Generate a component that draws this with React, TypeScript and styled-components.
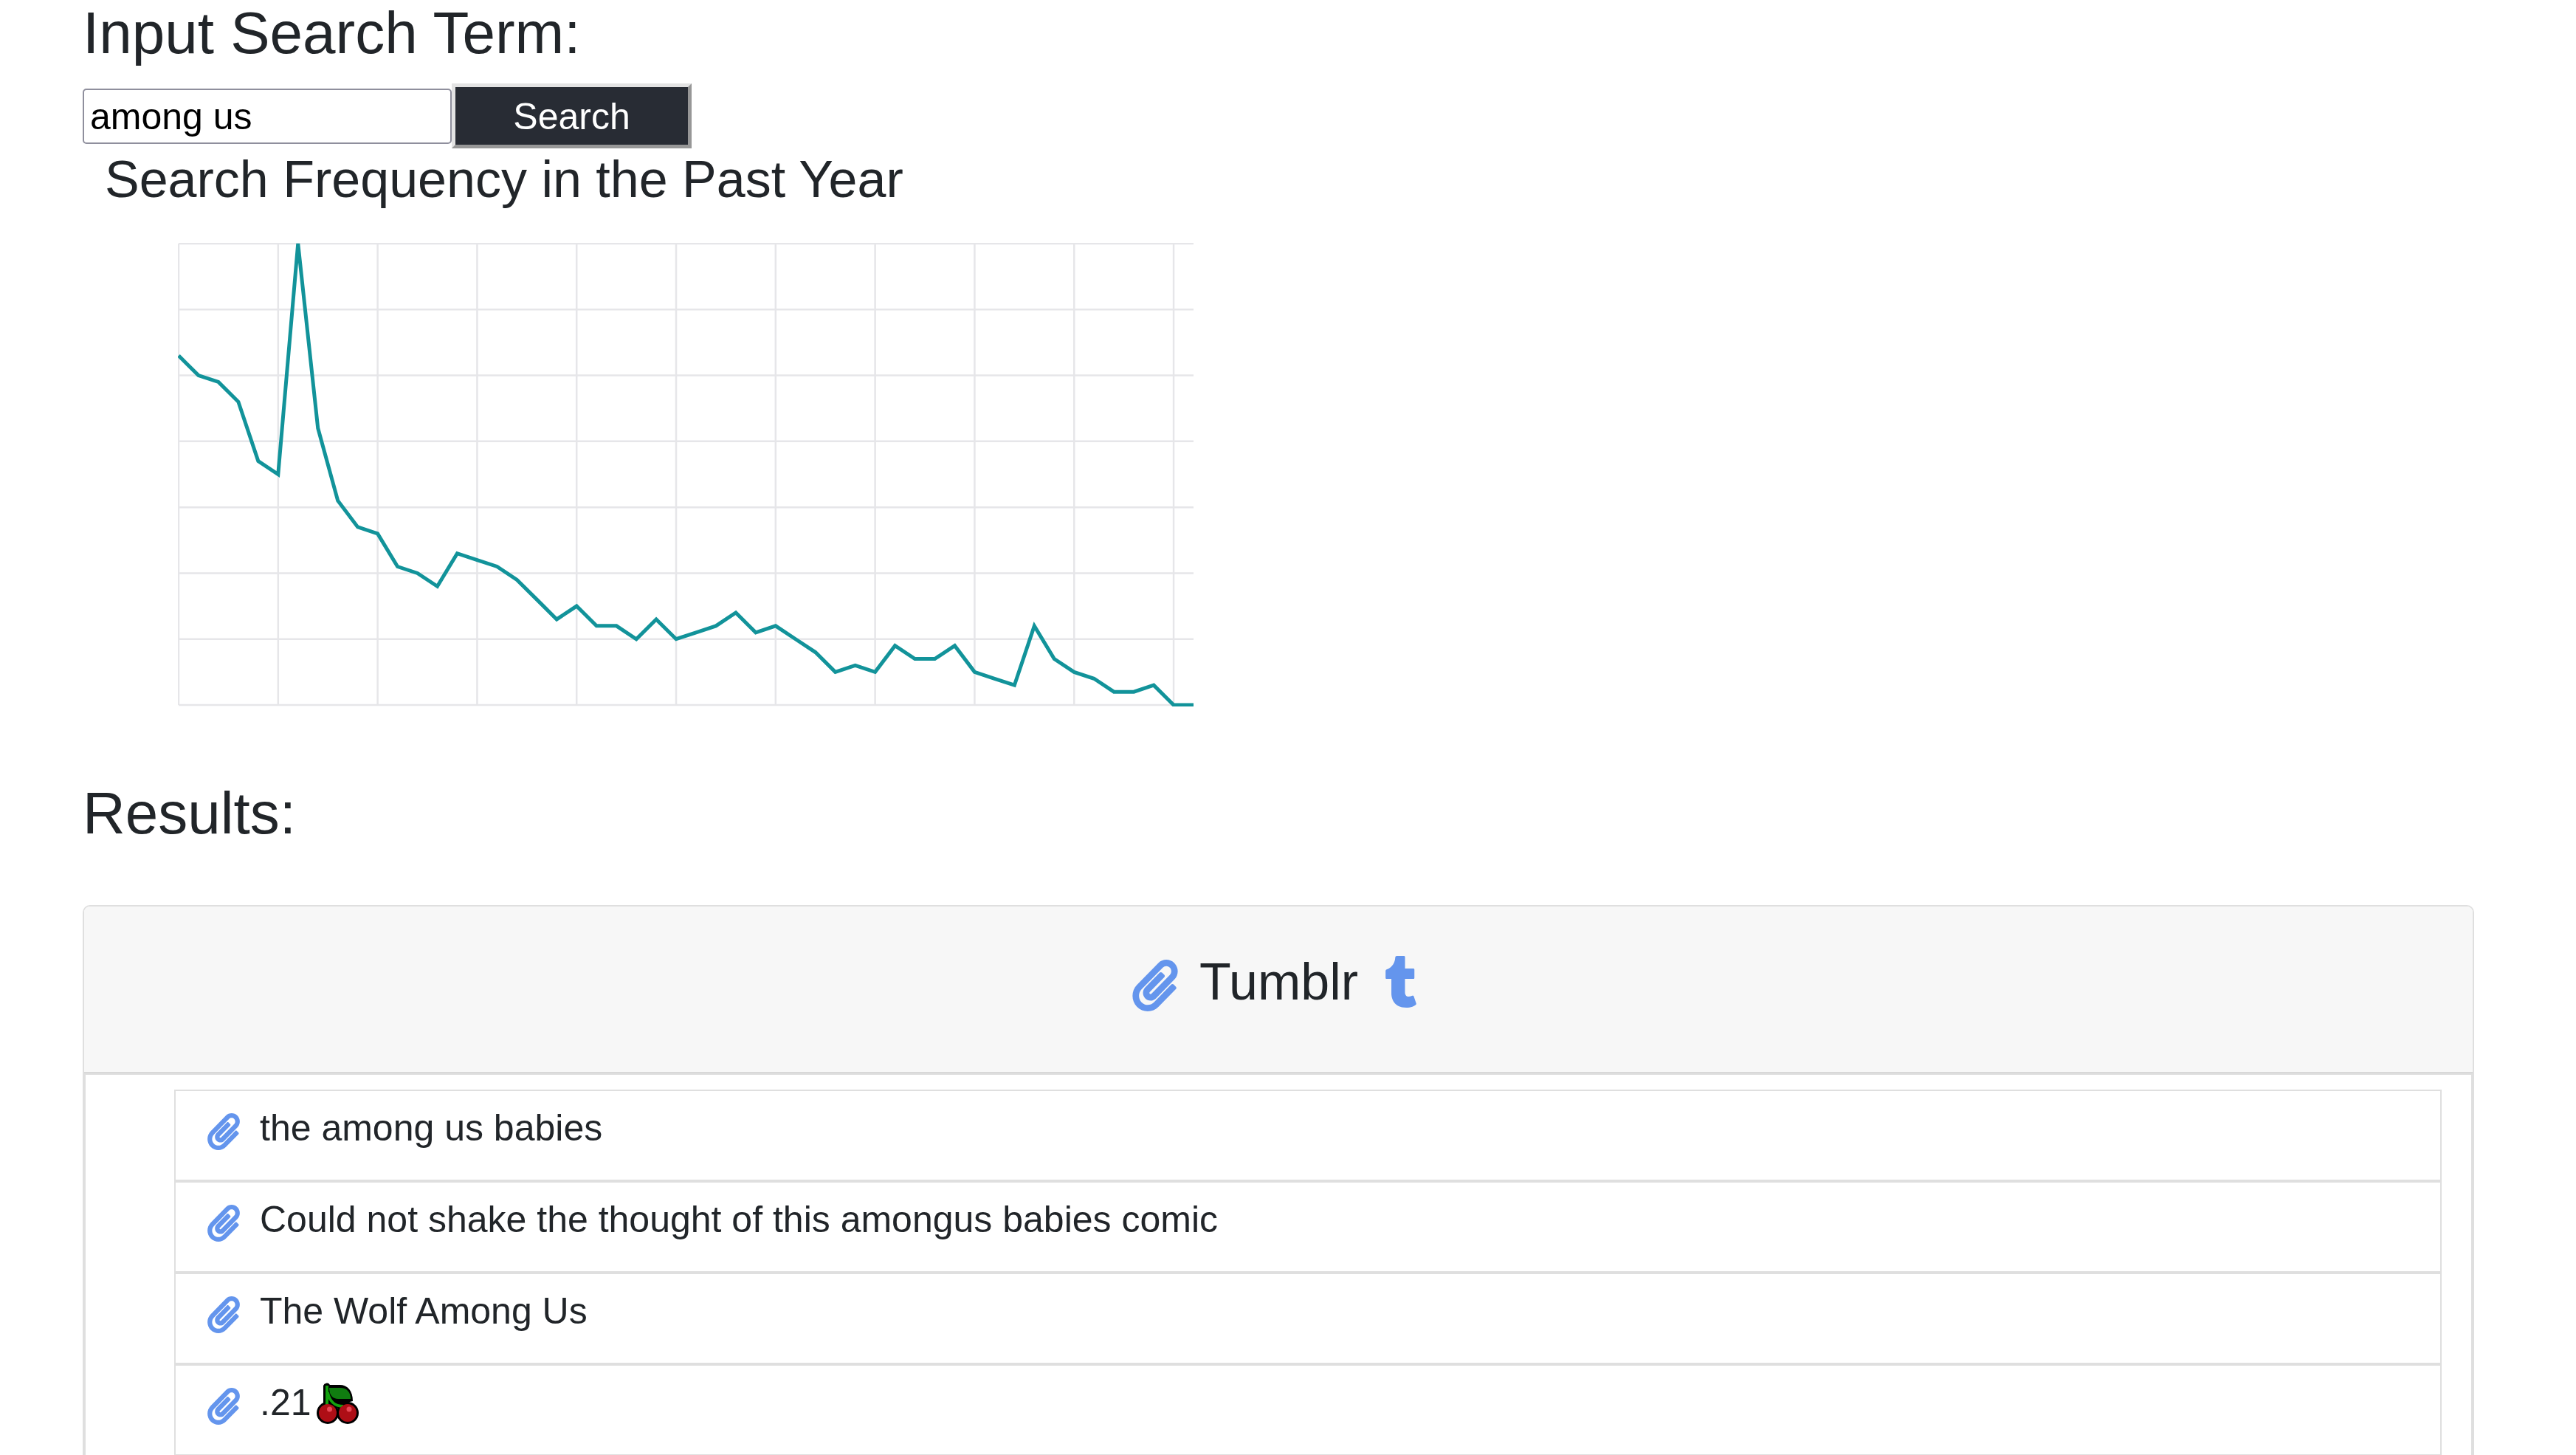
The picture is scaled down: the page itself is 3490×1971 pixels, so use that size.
import React, { useState } from "react";
import styled, { createGlobalStyle } from "styled-components";
import { FaPaperclip, FaTumblr } from "react-icons/fa";

const GlobalStyle = createGlobalStyle`
  *, *::before, *::after { box-sizing: border-box; }
  body {
    margin: 0;
    background: #fff;
    color: #212529;
    font-family: Arial, "Liberation Sans", sans-serif;
    font-size: 50px;
    line-height: 75px;
  }
`;

const Page = styled.main`
  height: 100vh;
  overflow: hidden;
  padding: 0 138px 0 112px;
`;

const Heading = styled.h1`
  margin: 0;
  font-size: 80px;
  font-weight: 400;
  line-height: 90px;
`;

const HeadingLabel = styled.label`
  display: block;
`;

const SearchForm = styled.form`
  display: flex;
  align-items: center;
  margin-top: 23px;
`;

const SearchInput = styled.input`
  width: 500px;
  height: 75px;
  padding: 2px 8px 0;
  border: 2px solid #8f8f9d;
  border-radius: 5px;
  background: #fff;
  color: #000;
  font: inherit;
  line-height: 60px;
`;

const SearchButton = styled.button`
  width: 325px;
  height: 88px;
  padding: 2px 0 0;
  border: 5px solid;
  border-color: #e3e3e3 #979797 #979797 #e3e3e3;
  background: #282c34;
  color: #fff;
  font: inherit;
  line-height: 60px;
`;

const ChartTitle = styled.h2`
  margin: 0 0 0 30px;
  font-size: 70px;
  font-weight: 400;
  line-height: 84px;
`;

const ChartArea = styled.section`
  padding: 44px 0 100px 129px;
`;

const ChartSvg = styled.svg`
  display: block;
  width: 1376px;
  height: 628px;
`;

const Card = styled.section`
  margin-top: 79px;
  border: 2px solid #dfdfdf;
  border-radius: 10px;
`;

const CardHeader = styled.header`
  display: flex;
  justify-content: center;
  align-items: center;
  padding: 60px 10px 80px 0;
  border-bottom: 2px solid #d8d8d8;
  border-radius: 8px 8px 0 0;
  background: #f7f7f7;
`;

const CardTitle = styled.h2`
  margin: 0 36px 0 29px;
  font-size: 70px;
  font-weight: 400;
  line-height: 84px;
`;

const Clip = styled(FaPaperclip)<{ $large?: boolean }>`
  flex: none;
  width: ${(p) => (p.$large ? 62 : 44)}px;
  height: ${(p) => (p.$large ? 70 : 50)}px;
  margin-top: ${(p) => (p.$large ? 10 : 8)}px;
  color: #6495ed;
`;

const TumblrMark = styled(FaTumblr)`
  flex: none;
  width: 44px;
  height: 70px;
  color: #6495ed;
`;

const CardBody = styled.div`
  padding: 20px 40px 20px 120px;
  border: 2px solid #dfdfdf;
`;

const ResultList = styled.ul`
  margin: 0;
  padding: 0;
  list-style: none;
`;

const ResultRow = styled.li`
  display: flex;
  align-items: center;
  padding: 13px 43px 32px;
  border: 2px solid #dfdfdf;
`;

const ResultText = styled.span`
  margin-left: 27px;
`;

const CherrySvg = styled.svg`
  flex: none;
  width: 57px;
  height: 57px;
  margin-left: 7px;
`;

const FREQUENCY = [
  53, 50, 49, 46, 37, 35, 70, 42, 31, 27, 26, 21, 20, 18, 23, 22, 21, 19, 16,
  13, 15, 12, 12, 10, 13, 10, 11, 12, 14, 11, 12, 10, 8, 5, 6, 5, 9, 7, 7, 9, 5,
  4, 3, 12, 7, 5, 4, 2, 2, 3, 0, 0,
];

const PLOT_WIDTH = 1375;
const PLOT_HEIGHT = 625;
const MAX_VALUE = 70;

function FrequencyChart() {
  const x = (i: number) => (i * PLOT_WIDTH) / (FREQUENCY.length - 1);
  const y = (v: number) => PLOT_HEIGHT - (v * PLOT_HEIGHT) / MAX_VALUE;
  const columns = Array.from({ length: 11 }, (_, i) => x(i * 5));
  const rows = Array.from({ length: 8 }, (_, i) => y(i * 10));
  const points = FREQUENCY.map((v, i) => `${x(i)},${y(v)}`).join(" ");
  return (
    <ChartSvg viewBox="-1 -1 1376 628" role="img" aria-label="Search frequency">
      <g stroke="#e6e6e9" strokeWidth="2.5">
        {columns.map((c) => (
          <line key={c} x1={c} x2={c} y1={0} y2={PLOT_HEIGHT} />
        ))}
        {rows.map((r) => (
          <line key={r} x1={0} x2={PLOT_WIDTH} y1={r} y2={r} />
        ))}
      </g>
      <polyline points={points} fill="none" stroke="#12939a" strokeWidth="5" />
    </ChartSvg>
  );
}

function Cherries() {
  return (
    <CherrySvg viewBox="0 0 57 57" role="img" aria-label="cherries">
      <path
        d="M9 5a5 5 0 0 1 9-1h13c11 0 18 8 18 22l-4 1L30 36L9 30z"
        fill="#000"
      />
      <circle cx="15" cy="42" r="15" fill="#000" />
      <circle cx="42" cy="42" r="15" fill="#000" />
      <path d="M17 8h15c9 0 14 6 14 15H29c-7 0-12-5-12-15z" fill="#107c10" />
      <path
        d="M14 31V5M15 14c2 11 9 19 21 19"
        fill="none"
        stroke="#13a10e"
        strokeWidth="4"
      />
      <circle cx="15" cy="42" r="12" fill="#ae0e16" />
      <circle cx="42" cy="42" r="12" fill="#ae0e16" />
      <circle cx="17.500" cy="37" r="3.500" fill="#e74856" />
      <circle cx="44" cy="37" r="3.500" fill="#e74856" />
    </CherrySvg>
  );
}

const RESULTS = [
  { text: "the among us babies" },
  { text: "Could not shake the thought of this amongus babies comic" },
  { text: "The Wolf Among Us" },
  { text: ".21", cherries: true },
];

export default function App() {
  const [term, setTerm] = useState("among us");
  return (
    <>
      <GlobalStyle />
      <Page>
        <Heading>
          <HeadingLabel htmlFor="term">Input Search Term:</HeadingLabel>
        </Heading>
        <SearchForm onSubmit={(e) => e.preventDefault()}>
          <SearchInput
            id="term"
            type="text"
            value={term}
            onChange={(e) => setTerm(e.target.value)}
          />
          <SearchButton type="submit">Search</SearchButton>
        </SearchForm>
        <ChartTitle>Search Frequency in the Past Year</ChartTitle>
        <ChartArea>
          <FrequencyChart />
        </ChartArea>
        <Heading>Results:</Heading>
        <Card>
          <CardHeader>
            <Clip $large />
            <CardTitle>Tumblr</CardTitle>
            <TumblrMark />
          </CardHeader>
          <CardBody>
            <ResultList>
              {RESULTS.map((r) => (
                <ResultRow key={r.text}>
                  <Clip />
                  <ResultText>{r.text}</ResultText>
                  {r.cherries && <Cherries />}
                </ResultRow>
              ))}
            </ResultList>
          </CardBody>
        </Card>
      </Page>
    </>
  );
}
